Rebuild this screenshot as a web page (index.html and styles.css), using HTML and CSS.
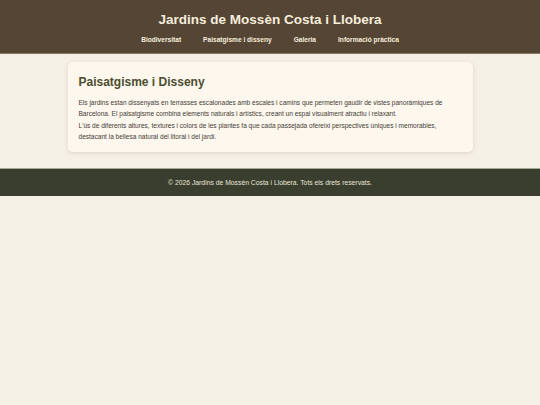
FILE: index.html
```html
<!DOCTYPE html>
<html lang="ca">
<head>
<meta charset="utf-8">
<title>Jardins de Mossèn Costa i Llobera</title>
<link rel="stylesheet" href="styles.css">
</head>
<body>
<header class="site-header">
  <h1 class="site-title">Jardins de Mossèn Costa i Llobera</h1>
  <nav class="main-nav">
    <a href="#">Biodiversitat</a>
    <a href="#">Paisatgisme i disseny</a>
    <a href="#">Galeria</a>
    <a href="#">Informació pràctica</a>
  </nav>
</header>
<main class="content">
  <section class="card">
    <h2 class="card-title">Paisatgisme i Disseny</h2>
    <p class="card-text">Els jardins estan dissenyats en terrasses escalonades amb escales i camins que permeten gaudir de vistes panoràmiques de Barcelona. El paisatgisme combina elements naturals i artístics, creant un espai visualment atractiu i relaxant.<br>L'ús de diferents altures, textures i colors de les plantes fa que cada passejada ofereixi perspectives úniques i memorables, destacant la bellesa natural del litoral i del jardí.</p>
  </section>
</main>
<footer class="site-footer">
  <p>© 2026 Jardins de Mossèn Costa i Llobera. Tots els drets reservats.</p>
</footer>
</body>
</html>
```
FILE: styles.css
```css
* { box-sizing: border-box; }
html, body { margin: 0; padding: 0; }
body {
  background: #f5f0e6;
  font-family: "Liberation Sans", Arial, sans-serif;
  color: #3d3a30;
}
.site-header {
  background: #554534;
  border-bottom: 1px solid #8a7a66;
  height: 54px;
  padding-top: 11px;
  text-align: center;
}
.site-title {
  margin: 0;
  font-size: 13.5px;
  line-height: 17px;
  font-weight: bold;
  color: #f6eedd;
}
.main-nav {
  margin-top: 7px;
  display: flex;
  justify-content: center;
  gap: 22px;
}
.main-nav a {
  color: #f6eedd;
  text-decoration: none;
  font-size: 6.6px;
  font-weight: bold;
  line-height: 9px;
}
.content {
  padding: 8px 0 16px;
  display: flex;
  justify-content: center;
}
.card {
  width: 405px;
  background: #fdf7ee;
  border-radius: 5px;
  box-shadow: 0 1px 4px rgba(80, 60, 30, 0.15);
  padding: 13px 11px 9.5px;
}
.card-title {
  margin: 0 0 7px;
  font-size: 12px;
  line-height: 15px;
  font-weight: bold;
  color: #4b4d2e;
}
.card-text {
  margin: 0;
  font-size: 6.55px;
  line-height: 11.3px;
  color: #444036;
}
.site-footer {
  background: #3a3e2f;
  border-top: 1px solid #a8a890;
  height: 28px;
  display: flex;
  align-items: center;
  justify-content: center;
}
.site-footer p {
  margin: 0;
  font-size: 6.8px;
  color: #e8e4d6;
}
```
